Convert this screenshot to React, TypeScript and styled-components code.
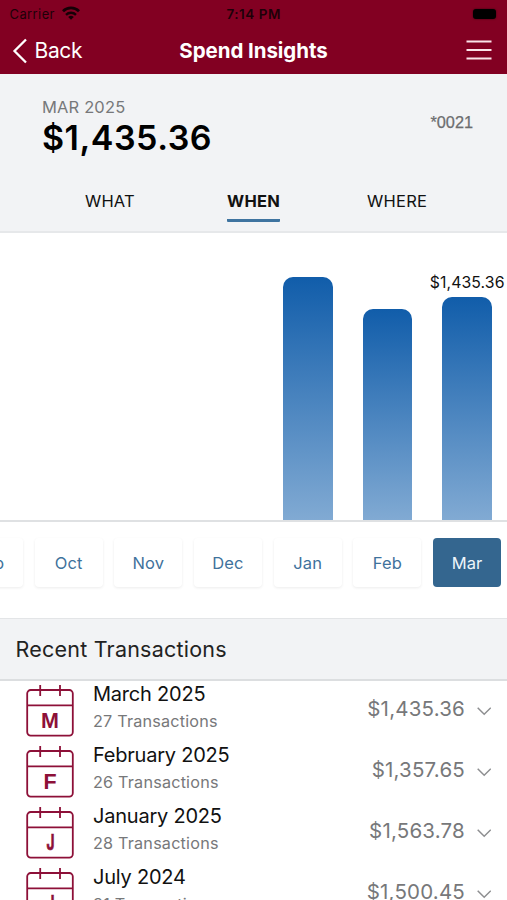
import React from "react";
import styled, { createGlobalStyle } from "styled-components";

const GlobalStyle = createGlobalStyle`
  *, *::before, *::after { box-sizing: border-box; }
  body { margin: 0; background: #fff; font-family: Inter, "Liberation Sans", sans-serif; overflow: hidden; }
  button { font: inherit; border: 0; padding: 0; background: none; }
`;

const maroon = "#820022";
const steel = "#34668f";

const Screen = styled.main`
  width: 507px;
  height: 900px;
  overflow: hidden;
  display: flex;
  flex-direction: column;
  background: #fff;
  white-space: nowrap;
`;

const TopArea = styled.header`
  flex: none;
  height: 74px;
  background: ${maroon};
`;

const StatusBar = styled.div`
  display: grid;
  grid-template-columns: 1fr auto 1fr;
  align-items: center;
  height: 28px;
  padding: 0 11px 0 9.5px;
  color: #1d0008;
  font-size: 13px;
  line-height: 28px;
`;

const Carrier = styled.div`
  display: flex;
  align-items: center;
  gap: 7px;
  letter-spacing: 0.4px;
  svg { margin-top: -2px; }
`;

const Clock = styled.time`
  font-size: 13.5px;
  font-weight: 600;
  letter-spacing: 0.55px;
  margin-right: -2px;
`;

const Battery = styled.span`
  justify-self: end;
  width: 23px;
  height: 10px;
  margin-top: -1px;
  border-radius: 3px;
  background: #000;
  box-shadow: 0 0 2px #38000f;
`;

const NavBar = styled.nav`
  display: grid;
  grid-template-columns: 1fr auto 1fr;
  align-items: center;
  height: 44px;
  padding: 0 15.5px 0 15.5px;
  color: #fff;
`;

const BackButton = styled.button`
  display: flex;
  align-items: center;
  gap: 6.5px;
  margin-left: -3.5px;
  color: #fff;
  font-size: 21px;
  line-height: 44px;
  letter-spacing: -0.35px;
`;

const Title = styled.h1`
  margin: 0;
  font-size: 20.5px;
  font-weight: 700;
  line-height: 45px;
  letter-spacing: -0.06px;
`;

const MenuIcon = styled.svg`
  justify-self: end;
  width: 26px;
  height: 20px;
  margin-top: -1px;
`;

const Summary = styled.section`
  flex: none;
  height: 159px;
  background: #f2f3f5;
  border-bottom: 2px solid #e6e8ea;
`;

const SummaryHead = styled.div`
  display: flex;
  justify-content: space-between;
  height: 106px;
  padding: 21px 34px 0 42px;
`;

const Period = styled.div`
  color: #77787a;
  font-size: 16.5px;
  line-height: 24px;
  letter-spacing: 0.15px;
`;

const Total = styled.div`
  color: #000;
  font-size: 34px;
  font-weight: 600;
  line-height: 37px;
  letter-spacing: 0.5px;
`;

const Account = styled.div`
  padding-top: 16px;
  font-family: "Liberation Sans", Arial, sans-serif;
  font-size: 16.3px;
  line-height: 22px;
  color: #6c6d6f;
  -webkit-text-stroke: 0.25px #6c6d6f;
`;

const Tabs = styled.div`
  display: grid;
  grid-template-columns: repeat(3, 143.6px);
  justify-content: center;
  height: 42px;
`;

const Tab = styled.button<{ $active?: boolean }>`
  justify-self: center;
  height: 42px;
  padding-top: 3px;
  border-bottom: 3px solid ${(p) => (p.$active ? "#3f74a0" : "transparent")};
  border-radius: 1px;
  color: #111;
  font-size: 16.5px;
  font-weight: ${(p) => (p.$active ? 700 : 400)};
  line-height: 37px;
  letter-spacing: 0.2px;
`;

const Chart = styled.section`
  flex: none;
  display: flex;
  justify-content: flex-end;
  align-items: flex-end;
  gap: 30px;
  height: 289px;
  padding-right: 15px;
  border-bottom: 2px solid #dfe1e3;
`;

const BarColumn = styled.div`
  display: flex;
  flex-direction: column;
  align-items: center;
  width: 49.7px;
`;

const BarLabel = styled.span`
  font-size: 15.8px;
  line-height: 22px;
  margin-bottom: 3px;
  letter-spacing: 0.1px;
  color: #111;
`;

const Bar = styled.div`
  width: 49.7px;
  border-radius: 10px 10px 0 0;
  background: linear-gradient(#115daa, #81aad3);
`;

const Months = styled.div`
  flex: none;
  display: flex;
  justify-content: flex-end;
  gap: 11.7px;
  height: 96px;
  padding: 15.5px 6px 0 0;
`;

const Month = styled.button<{ $active?: boolean }>`
  flex: none;
  width: 68px;
  height: 49px;
  border-radius: 4px;
  background: ${(p) => (p.$active ? steel : "#fff")};
  color: ${(p) => (p.$active ? "#eef5fb" : "#3f729c")};
  box-shadow: ${(p) => (p.$active ? "none" : "0 1px 3px rgba(0,0,0,0.08)")};
  font-size: 16.5px;
  line-height: 50px;
  letter-spacing: 0.1px;
`;

const SectionTitle = styled.h2`
  flex: none;
  height: 63px;
  margin: 0;
  padding-left: 15.5px;
  border-top: 1px solid #e3e5e7;
  border-bottom: 2px solid #dcdee0;
  background: #f2f3f5;
  color: #222;
  font-size: 21.5px;
  font-weight: 400;
  line-height: 61px;
  letter-spacing: 0.22px;
`;

const List = styled.ul`
  margin: 0;
  padding: 0;
  list-style: none;
`;

const Row = styled.li`
  display: flex;
  height: 61px;
  padding: 0 16px 0 24.5px;
`;

const CalendarIcon = styled.svg`
  flex: none;
  width: 50px;
  height: 54px;
  margin-top: 3px;
  margin-right: 18.5px;
`;

const RowText = styled.div`
  flex: 1;
`;

const MonthName = styled.div`
  font-size: 20px;
  line-height: 26px;
  color: #111;
  letter-spacing: -0.22px;
`;

const Count = styled.div`
  font-size: 16.2px;
  line-height: 28px;
  color: #77787a;
  letter-spacing: 0.2px;
`;

const Amount = styled.div`
  display: flex;
  gap: 11.5px;
  height: 54px;
  align-items: center;
  color: #77787a;
  font-size: 20.5px;
  letter-spacing: 0.2px;
  svg { margin-top: 7px; }
`;

const months = ["Sep", "Oct", "Nov", "Dec", "Jan", "Feb", "Mar"];

const bars = [
  { height: 243 },
  { height: 211 },
  { height: 223, label: "$1,435.36" },
];

const transactions = [
  { letter: "M", month: "March 2025", count: 27, amount: "$1,435.36" },
  { letter: "F", month: "February 2025", count: 26, amount: "$1,357.65" },
  { letter: "J", month: "January 2025", count: 28, amount: "$1,563.78" },
  { letter: "J", month: "July 2024", count: 31, amount: "$1,500.45" },
];

const Wifi = () => (
  <svg width="18" height="14" viewBox="0 0 18 14" fill="none" stroke="#150006">
    <path d="M1 5.2a11.4 11.4 0 0 1 16 0" strokeWidth="2.8" />
    <path d="M4 8.8a7.2 7.2 0 0 1 10 0" strokeWidth="2.4" />
    <path d="M9 13.8 6.2 11a4 4 0 0 1 5.6 0z" fill="#150006" stroke="none" />
  </svg>
);

const Calendar = ({ letter }: { letter: string }) => (
  <CalendarIcon viewBox="0 0 50 54" fill="none" stroke="#8d1038" strokeWidth="1.8">
    <rect x="2.2" y="6" width="45.6" height="45.6" rx="3.5" />
    <path d="M2.2 21.4h45.6M15.2 1v11M35 1v11" />
    <text
      x={letter === "J" ? 25.6 : 25}
      y="43.8"
      textAnchor="middle"
      fill="#8d1038"
      stroke={letter === "J" ? "#8d1038" : "none"}
      strokeWidth="0.7"
      fontFamily={letter === "J" ? "Inter, sans-serif" : "Liberation Sans, Arial, sans-serif"}
      fontWeight="700"
      fontSize="21.5"
      textLength={letter === "J" ? 8 : undefined}
      lengthAdjust="spacingAndGlyphs"
    >
      {letter}
    </text>
  </CalendarIcon>
);

export default function App() {
  return (
    <>
      <GlobalStyle />
      <Screen>
        <TopArea>
          <StatusBar>
            <Carrier>
              Carrier <Wifi />
            </Carrier>
            <Clock>7:14 PM</Clock>
            <Battery />
          </StatusBar>
          <NavBar>
            <BackButton>
              <svg width="16" height="26" viewBox="0 0 16 26" fill="none" stroke="#fff" strokeWidth="2.3">
                <path d="M14 1.5 2.5 13 14 24.5" />
              </svg>
              Back
            </BackButton>
            <Title>Spend Insights</Title>
            <MenuIcon viewBox="0 0 26 20" stroke="#fbe3e9" strokeWidth="1.8" aria-label="Menu">
              <path d="M.5 1.5h25M.5 10h25M.5 18.5h25" />
            </MenuIcon>
          </NavBar>
        </TopArea>
        <Summary>
          <SummaryHead>
            <div>
              <Period>MAR 2025</Period>
              <Total>$1,435.36</Total>
            </div>
            <Account>*0021</Account>
          </SummaryHead>
          <Tabs>
            <Tab>WHAT</Tab>
            <Tab $active>WHEN</Tab>
            <Tab>WHERE</Tab>
          </Tabs>
        </Summary>
        <Chart>
          {bars.map((bar, i) => (
            <BarColumn key={i}>
              {bar.label && <BarLabel>{bar.label}</BarLabel>}
              <Bar style={{ height: bar.height }} />
            </BarColumn>
          ))}
        </Chart>
        <Months>
          {months.map((m) => (
            <Month key={m} $active={m === "Mar"}>
              {m}
            </Month>
          ))}
        </Months>
        <SectionTitle>Recent Transactions</SectionTitle>
        <List>
          {transactions.map((t) => (
            <Row key={t.month}>
              <Calendar letter={t.letter} />
              <RowText>
                <MonthName>{t.month}</MonthName>
                <Count>{t.count} Transactions</Count>
              </RowText>
              <Amount>
                {t.amount}
                <svg width="14.5" height="8.5" viewBox="0 0 14.5 8.5" fill="none" stroke="#8d8e90" strokeWidth="1.5">
                  <path d="m.7.7 6.5 6.6L13.8.7" />
                </svg>
              </Amount>
            </Row>
          ))}
        </List>
      </Screen>
    </>
  );
}
